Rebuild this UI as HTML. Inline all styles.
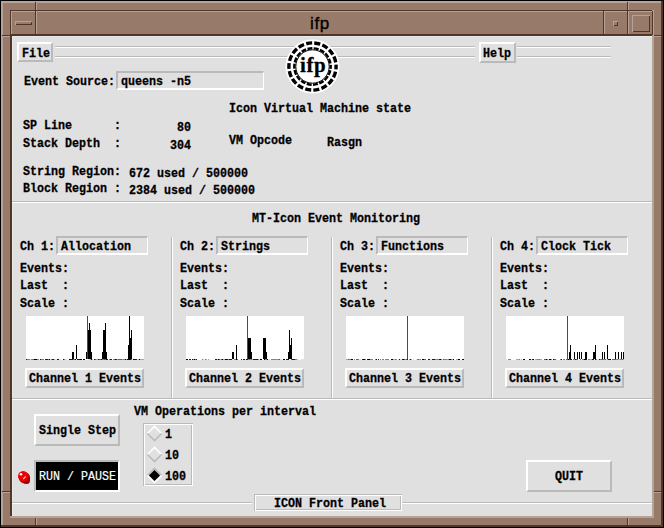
<!DOCTYPE html>
<html><head><meta charset="utf-8"><style>
html,body{margin:0;padding:0;width:664px;height:528px;overflow:hidden;background:#000}
body>div{position:absolute}
.b{box-sizing:border-box}
.t{position:absolute;font-family:"Liberation Mono",monospace;font-weight:bold;font-size:13.5px;line-height:15px;white-space:pre;transform-origin:0 0;transform:scaleX(0.864);-webkit-text-stroke:0.3px currentColor}
.tr{font-weight:normal;-webkit-text-stroke:0.2px currentColor}
.title{font-family:"Liberation Sans",sans-serif;font-size:17px;line-height:20px;color:#000;white-space:pre;letter-spacing:0.6px;-webkit-text-stroke:0.35px #000}
</style></head><body>
<div style="left:0px;top:0px;width:664px;height:528px;background:#000"></div>
<div style="left:1px;top:1px;width:662px;height:526px;background:#987a6a"></div>
<div style="left:1px;top:1px;width:661px;height:2px;background:#b6a297"></div>
<div style="left:1px;top:1px;width:2px;height:525px;background:#b6a297"></div>
<div style="left:661px;top:1px;width:2px;height:526px;background:#503626"></div>
<div style="left:1px;top:525px;width:662px;height:2px;background:#503626"></div>
<div style="left:2px;top:2px;width:1px;height:1px;background:#b6a297"></div>
<div style="left:2px;top:35px;width:8px;height:1px;background:#503626"></div>
<div style="left:2px;top:36px;width:8px;height:1px;background:#b6a297"></div>
<div style="left:2px;top:491px;width:8px;height:1px;background:#503626"></div>
<div style="left:2px;top:492px;width:8px;height:1px;background:#b6a297"></div>
<div style="left:654px;top:35px;width:7px;height:1px;background:#503626"></div>
<div style="left:654px;top:36px;width:7px;height:1px;background:#b6a297"></div>
<div style="left:654px;top:491px;width:7px;height:1px;background:#503626"></div>
<div style="left:654px;top:492px;width:7px;height:1px;background:#b6a297"></div>
<div style="left:35px;top:2px;width:1px;height:8px;background:#503626"></div>
<div style="left:36px;top:2px;width:1px;height:8px;background:#b6a297"></div>
<div style="left:35px;top:518px;width:1px;height:7px;background:#503626"></div>
<div style="left:36px;top:518px;width:1px;height:7px;background:#b6a297"></div>
<div style="left:627px;top:2px;width:1px;height:8px;background:#503626"></div>
<div style="left:628px;top:2px;width:1px;height:8px;background:#b6a297"></div>
<div style="left:627px;top:518px;width:1px;height:7px;background:#503626"></div>
<div style="left:628px;top:518px;width:1px;height:7px;background:#b6a297"></div>
<div style="left:10px;top:10px;width:644px;height:1px;background:#503626"></div>
<div style="left:10px;top:10px;width:1px;height:508px;background:#503626"></div>
<div style="left:652px;top:10px;width:2px;height:508px;background:#b6a297"></div>
<div style="left:10px;top:516px;width:644px;height:2px;background:#b6a297"></div>
<div style="left:11px;top:11px;width:25px;height:1px;background:#b6a297"></div>
<div style="left:11px;top:11px;width:1px;height:24px;background:#b6a297"></div>
<div style="left:35px;top:11px;width:1px;height:24px;background:#503626"></div>
<div style="left:11px;top:34px;width:25px;height:1px;background:#503626"></div>
<div style="left:36px;top:11px;width:568px;height:1px;background:#b6a297"></div>
<div style="left:36px;top:11px;width:1px;height:24px;background:#b6a297"></div>
<div style="left:603px;top:11px;width:1px;height:24px;background:#503626"></div>
<div style="left:36px;top:34px;width:568px;height:1px;background:#503626"></div>
<div style="left:604px;top:11px;width:24px;height:1px;background:#b6a297"></div>
<div style="left:604px;top:11px;width:1px;height:24px;background:#b6a297"></div>
<div style="left:627px;top:11px;width:1px;height:24px;background:#503626"></div>
<div style="left:604px;top:34px;width:24px;height:1px;background:#503626"></div>
<div style="left:628px;top:11px;width:25px;height:1px;background:#b6a297"></div>
<div style="left:628px;top:11px;width:1px;height:24px;background:#b6a297"></div>
<div style="left:652px;top:11px;width:1px;height:24px;background:#503626"></div>
<div style="left:628px;top:34px;width:25px;height:1px;background:#503626"></div>
<div style="left:11px;top:35px;width:641px;height:1px;background:#503626"></div>
<div style="left:11px;top:35px;width:1px;height:481px;background:#503626"></div>
<div style="left:15px;top:21px;width:17px;height:4px;background:#b6a297"></div>
<div style="left:16px;top:22px;width:16px;height:3px;background:#503626"></div>
<div style="left:16px;top:22px;width:15px;height:2px;background:#987a6a"></div>
<div style="left:613px;top:21px;width:5px;height:5px;background:#b6a297"></div>
<div style="left:614px;top:22px;width:4px;height:4px;background:#503626"></div>
<div style="left:614px;top:22px;width:3px;height:3px;background:#987a6a"></div>
<div style="left:632px;top:15px;width:18px;height:17px;background:#b6a297"></div>
<div style="left:633px;top:16px;width:17px;height:16px;background:#503626"></div>
<div style="left:633px;top:16px;width:16px;height:15px;background:#987a6a"></div>
<div class="title" style="left:310px;top:14px">ifp</div>
<div style="left:12px;top:36px;width:640px;height:480px;background:#e0e0e0"></div>
<div style="left:12px;top:36px;width:640px;height:1px;background:#e9e9e9"></div>
<div style="left:12px;top:36px;width:1px;height:480px;background:#e9e9e9"></div>
<div class="b" style="left:17px;top:42px;width:36px;height:20px;border-style:solid;border-width:2px;border-color:#ffffff #bababa #bababa #ffffff;"></div>
<div class="t" style="left:22px;top:46px;color:#000">File</div>
<div style="left:55px;top:46px;width:420px;height:1px;background:#bababa"></div>
<div style="left:55px;top:47px;width:420px;height:1px;background:#ffffff"></div>
<div style="left:55px;top:56px;width:420px;height:1px;background:#bababa"></div>
<div style="left:55px;top:57px;width:420px;height:1px;background:#ffffff"></div>
<div class="b" style="left:479px;top:42px;width:37px;height:21px;border-style:solid;border-width:2px;border-color:#ffffff #bababa #bababa #ffffff;"></div>
<div class="t" style="left:483px;top:46px;color:#000">Help</div>
<div style="left:517px;top:46px;width:94px;height:1px;background:#bababa"></div>
<div style="left:517px;top:47px;width:94px;height:1px;background:#ffffff"></div>
<div style="left:517px;top:56px;width:94px;height:1px;background:#bababa"></div>
<div style="left:517px;top:57px;width:94px;height:1px;background:#ffffff"></div>
<svg style="position:absolute;left:0;top:0" width="664" height="528">
<circle cx="312.5" cy="66.5" r="27" fill="#fff"/>
<circle cx="312.5" cy="66.5" r="23.6" fill="none" stroke="#000" stroke-width="3.4" stroke-dasharray="6.038 2.2" stroke-dashoffset="3.019"/>
<circle cx="312.5" cy="66.5" r="18.2" fill="none" stroke="#000" stroke-width="2.4" stroke-dasharray="4.953 1.4" stroke-dashoffset="2.476"/>
<circle cx="312.5" cy="66.5" r="16.7" fill="none" stroke="#000" stroke-width="1"/>
<text x="300" y="72" font-family="Liberation Serif" font-weight="bold" font-size="21" letter-spacing="0.6" stroke="#000" stroke-width="0.3">ifp</text>
</svg>
<div class="t" style="left:24px;top:74px;color:#000">Event Source:</div>
<div class="b" style="left:116px;top:71px;width:148px;height:19px;border-style:solid;border-width:2px 1px 2px 2px;border-color:#bababa #ffffff #ffffff #bababa"></div>
<div class="t" style="left:121px;top:74px;color:#000">queens -n5</div>
<div class="t" style="left:229px;top:101px;color:#000">Icon Virtual Machine state</div>
<div class="t" style="left:23px;top:118px;color:#000">SP Line      :</div>
<div class="t" style="left:177px;top:120px;color:#000">80</div>
<div class="t" style="left:23px;top:136px;color:#000">Stack Depth  :</div>
<div class="t" style="left:170px;top:138px;color:#000">304</div>
<div class="t" style="left:229px;top:133px;color:#000">VM Opcode</div>
<div class="t" style="left:327px;top:135px;color:#000">Rasgn</div>
<div class="t" style="left:23px;top:164px;color:#000">String Region:</div>
<div class="t" style="left:129px;top:166px;color:#000">672 used / 500000</div>
<div class="t" style="left:23px;top:181px;color:#000">Block Region :</div>
<div class="t" style="left:129px;top:183px;color:#000">2384 used / 500000</div>
<div style="left:12px;top:201px;width:640px;height:1px;background:#bababa"></div>
<div style="left:12px;top:202px;width:640px;height:1px;background:#ffffff"></div>
<div class="t" style="left:252px;top:211px;color:#000">MT-Icon Event Monitoring</div>
<div class="t" style="left:20px;top:239px;color:#000">Ch 1:</div>
<div class="b" style="left:56px;top:236px;width:92px;height:19px;border-style:solid;border-width:2px 1px 2px 2px;border-color:#bababa #ffffff #ffffff #bababa"></div>
<div class="t" style="left:61px;top:239px;color:#000">Allocation</div>
<div class="t" style="left:20px;top:261px;color:#000">Events:</div>
<div class="t" style="left:20px;top:278px;color:#000">Last  :</div>
<div class="t" style="left:20px;top:296px;color:#000">Scale :</div>
<div style="left:26px;top:316px;width:118px;height:44px;background:#ffffff"></div>
<div style="left:26px;top:359px;width:1px;height:1px;background:#0000f0"></div>
<div style="left:27px;top:359px;width:2px;height:1px;background:#00e000"></div>
<div style="left:29px;top:359px;width:1px;height:1px;background:#00e000"></div>
<div style="left:30px;top:359px;width:1px;height:1px;background:#ffff00"></div>
<div style="left:31px;top:359px;width:1px;height:1px;background:#00e000"></div>
<div style="left:32px;top:359px;width:1px;height:1px;background:#00e000"></div>
<div style="left:33px;top:359px;width:1px;height:1px;background:#f000f0"></div>
<div style="left:34px;top:359px;width:2px;height:1px;background:#000"></div>
<div style="left:36px;top:359px;width:1px;height:1px;background:#000"></div>
<div style="left:37px;top:359px;width:2px;height:1px;background:#00e000"></div>
<div style="left:39px;top:359px;width:1px;height:1px;background:#fff"></div>
<div style="left:40px;top:359px;width:1px;height:1px;background:#0000f0"></div>
<div style="left:41px;top:359px;width:2px;height:1px;background:#00e000"></div>
<div style="left:43px;top:359px;width:1px;height:1px;background:#00e000"></div>
<div style="left:44px;top:359px;width:1px;height:1px;background:#fff"></div>
<div style="left:45px;top:359px;width:2px;height:1px;background:#0000f0"></div>
<div style="left:47px;top:359px;width:1px;height:1px;background:#0000f0"></div>
<div style="left:48px;top:359px;width:1px;height:1px;background:#00e000"></div>
<div style="left:49px;top:359px;width:1px;height:1px;background:#000"></div>
<div style="left:50px;top:359px;width:1px;height:1px;background:#ffff00"></div>
<div style="left:51px;top:359px;width:1px;height:1px;background:#00e000"></div>
<div style="left:52px;top:359px;width:1px;height:1px;background:#0000f0"></div>
<div style="left:53px;top:359px;width:1px;height:1px;background:#0000f0"></div>
<div style="left:54px;top:359px;width:1px;height:1px;background:#00f0f0"></div>
<div style="left:55px;top:359px;width:2px;height:1px;background:#ffff00"></div>
<div style="left:57px;top:359px;width:2px;height:1px;background:#0000f0"></div>
<div style="left:59px;top:359px;width:2px;height:1px;background:#ffff00"></div>
<div style="left:61px;top:359px;width:1px;height:1px;background:#fff"></div>
<div style="left:62px;top:359px;width:1px;height:1px;background:#fff"></div>
<div style="left:63px;top:359px;width:1px;height:1px;background:#0000f0"></div>
<div style="left:64px;top:359px;width:1px;height:1px;background:#00e000"></div>
<div style="left:65px;top:359px;width:2px;height:1px;background:#ffff00"></div>
<div style="left:67px;top:359px;width:2px;height:1px;background:#fff"></div>
<div style="left:69px;top:359px;width:1px;height:1px;background:#000"></div>
<div style="left:70px;top:359px;width:2px;height:1px;background:#0000f0"></div>
<div style="left:72px;top:359px;width:1px;height:1px;background:#0000f0"></div>
<div style="left:73px;top:359px;width:2px;height:1px;background:#f000f0"></div>
<div style="left:75px;top:359px;width:1px;height:1px;background:#000"></div>
<div style="left:76px;top:359px;width:1px;height:1px;background:#ffff00"></div>
<div style="left:77px;top:359px;width:1px;height:1px;background:#0000f0"></div>
<div style="left:78px;top:359px;width:2px;height:1px;background:#0000f0"></div>
<div style="left:80px;top:359px;width:2px;height:1px;background:#000"></div>
<div style="left:82px;top:359px;width:1px;height:1px;background:#fff"></div>
<div style="left:83px;top:359px;width:2px;height:1px;background:#000"></div>
<div style="left:85px;top:359px;width:1px;height:1px;background:#fff"></div>
<div style="left:86px;top:359px;width:2px;height:1px;background:#fff"></div>
<div style="left:88px;top:359px;width:2px;height:1px;background:#ffff00"></div>
<div style="left:90px;top:359px;width:1px;height:1px;background:#00f0f0"></div>
<div style="left:91px;top:359px;width:1px;height:1px;background:#0000f0"></div>
<div style="left:92px;top:359px;width:1px;height:1px;background:#00f0f0"></div>
<div style="left:93px;top:359px;width:1px;height:1px;background:#fff"></div>
<div style="left:94px;top:359px;width:1px;height:1px;background:#0000f0"></div>
<div style="left:95px;top:359px;width:1px;height:1px;background:#f000f0"></div>
<div style="left:96px;top:359px;width:2px;height:1px;background:#00f0f0"></div>
<div style="left:98px;top:359px;width:1px;height:1px;background:#0000f0"></div>
<div style="left:99px;top:359px;width:2px;height:1px;background:#f000f0"></div>
<div style="left:101px;top:359px;width:1px;height:1px;background:#0000f0"></div>
<div style="left:102px;top:359px;width:2px;height:1px;background:#00e000"></div>
<div style="left:104px;top:359px;width:1px;height:1px;background:#f000f0"></div>
<div style="left:105px;top:359px;width:1px;height:1px;background:#f000f0"></div>
<div style="left:106px;top:359px;width:1px;height:1px;background:#0000f0"></div>
<div style="left:107px;top:359px;width:1px;height:1px;background:#0000f0"></div>
<div style="left:108px;top:359px;width:1px;height:1px;background:#fff"></div>
<div style="left:109px;top:359px;width:1px;height:1px;background:#00e000"></div>
<div style="left:110px;top:359px;width:2px;height:1px;background:#0000f0"></div>
<div style="left:112px;top:359px;width:1px;height:1px;background:#fff"></div>
<div style="left:113px;top:359px;width:1px;height:1px;background:#00e000"></div>
<div style="left:114px;top:359px;width:1px;height:1px;background:#f000f0"></div>
<div style="left:115px;top:359px;width:1px;height:1px;background:#0000f0"></div>
<div style="left:116px;top:359px;width:1px;height:1px;background:#0000f0"></div>
<div style="left:117px;top:359px;width:1px;height:1px;background:#00f0f0"></div>
<div style="left:118px;top:359px;width:2px;height:1px;background:#f000f0"></div>
<div style="left:120px;top:359px;width:2px;height:1px;background:#f000f0"></div>
<div style="left:122px;top:359px;width:1px;height:1px;background:#00f0f0"></div>
<div style="left:123px;top:359px;width:2px;height:1px;background:#00e000"></div>
<div style="left:125px;top:359px;width:1px;height:1px;background:#000"></div>
<div style="left:126px;top:359px;width:1px;height:1px;background:#00f0f0"></div>
<div style="left:127px;top:359px;width:1px;height:1px;background:#000"></div>
<div style="left:128px;top:359px;width:1px;height:1px;background:#0000f0"></div>
<div style="left:129px;top:359px;width:1px;height:1px;background:#000"></div>
<div style="left:130px;top:359px;width:1px;height:1px;background:#0000f0"></div>
<div style="left:131px;top:359px;width:1px;height:1px;background:#00e000"></div>
<div style="left:132px;top:359px;width:1px;height:1px;background:#ffff00"></div>
<div style="left:133px;top:359px;width:1px;height:1px;background:#000"></div>
<div style="left:134px;top:359px;width:1px;height:1px;background:#0000f0"></div>
<div style="left:135px;top:359px;width:2px;height:1px;background:#0000f0"></div>
<div style="left:137px;top:359px;width:1px;height:1px;background:#ffff00"></div>
<div style="left:138px;top:359px;width:1px;height:1px;background:#00f0f0"></div>
<div style="left:139px;top:359px;width:1px;height:1px;background:#000"></div>
<div style="left:140px;top:359px;width:2px;height:1px;background:#00f0f0"></div>
<div style="left:142px;top:359px;width:2px;height:1px;background:#00f0f0"></div>
<div style="left:87px;top:316px;width:1px;height:43px;background:#f00"></div>
<div class="b" style="left:25px;top:368px;width:119px;height:20px;border-style:solid;border-width:2px;border-color:#ffffff #bababa #bababa #ffffff;"></div>
<div class="t" style="left:29px;top:371px;color:#000">Channel 1 Events</div>
<div class="t" style="left:180px;top:239px;color:#000">Ch 2:</div>
<div class="b" style="left:216px;top:236px;width:92px;height:19px;border-style:solid;border-width:2px 1px 2px 2px;border-color:#bababa #ffffff #ffffff #bababa"></div>
<div class="t" style="left:221px;top:239px;color:#000">Strings</div>
<div class="t" style="left:180px;top:261px;color:#000">Events:</div>
<div class="t" style="left:180px;top:278px;color:#000">Last  :</div>
<div class="t" style="left:180px;top:296px;color:#000">Scale :</div>
<div style="left:186px;top:316px;width:118px;height:44px;background:#ffffff"></div>
<div style="left:186px;top:359px;width:1px;height:1px;background:#000"></div>
<div style="left:187px;top:359px;width:1px;height:1px;background:#000"></div>
<div style="left:188px;top:359px;width:1px;height:1px;background:#fff"></div>
<div style="left:189px;top:359px;width:2px;height:1px;background:#0000f0"></div>
<div style="left:191px;top:359px;width:1px;height:1px;background:#fff"></div>
<div style="left:192px;top:359px;width:1px;height:1px;background:#0000f0"></div>
<div style="left:193px;top:359px;width:1px;height:1px;background:#00e000"></div>
<div style="left:194px;top:359px;width:1px;height:1px;background:#000"></div>
<div style="left:195px;top:359px;width:1px;height:1px;background:#00e000"></div>
<div style="left:196px;top:359px;width:1px;height:1px;background:#0000f0"></div>
<div style="left:197px;top:359px;width:1px;height:1px;background:#fff"></div>
<div style="left:198px;top:359px;width:1px;height:1px;background:#fff"></div>
<div style="left:199px;top:359px;width:1px;height:1px;background:#fff"></div>
<div style="left:200px;top:359px;width:2px;height:1px;background:#fff"></div>
<div style="left:202px;top:359px;width:1px;height:1px;background:#00e000"></div>
<div style="left:203px;top:359px;width:2px;height:1px;background:#ffff00"></div>
<div style="left:205px;top:359px;width:1px;height:1px;background:#00e000"></div>
<div style="left:206px;top:359px;width:1px;height:1px;background:#00f0f0"></div>
<div style="left:207px;top:359px;width:1px;height:1px;background:#fff"></div>
<div style="left:208px;top:359px;width:1px;height:1px;background:#00f0f0"></div>
<div style="left:209px;top:359px;width:1px;height:1px;background:#ffff00"></div>
<div style="left:210px;top:359px;width:1px;height:1px;background:#fff"></div>
<div style="left:211px;top:359px;width:1px;height:1px;background:#fff"></div>
<div style="left:212px;top:359px;width:2px;height:1px;background:#fff"></div>
<div style="left:214px;top:359px;width:1px;height:1px;background:#fff"></div>
<div style="left:215px;top:359px;width:2px;height:1px;background:#0000f0"></div>
<div style="left:217px;top:359px;width:1px;height:1px;background:#00f0f0"></div>
<div style="left:218px;top:359px;width:1px;height:1px;background:#000"></div>
<div style="left:219px;top:359px;width:1px;height:1px;background:#f000f0"></div>
<div style="left:220px;top:359px;width:1px;height:1px;background:#00f0f0"></div>
<div style="left:221px;top:359px;width:1px;height:1px;background:#f000f0"></div>
<div style="left:222px;top:359px;width:1px;height:1px;background:#000"></div>
<div style="left:223px;top:359px;width:2px;height:1px;background:#00f0f0"></div>
<div style="left:225px;top:359px;width:2px;height:1px;background:#000"></div>
<div style="left:227px;top:359px;width:1px;height:1px;background:#0000f0"></div>
<div style="left:228px;top:359px;width:1px;height:1px;background:#00e000"></div>
<div style="left:229px;top:359px;width:1px;height:1px;background:#0000f0"></div>
<div style="left:230px;top:359px;width:2px;height:1px;background:#0000f0"></div>
<div style="left:232px;top:359px;width:2px;height:1px;background:#ffff00"></div>
<div style="left:234px;top:359px;width:1px;height:1px;background:#00e000"></div>
<div style="left:235px;top:359px;width:1px;height:1px;background:#00e000"></div>
<div style="left:236px;top:359px;width:1px;height:1px;background:#000"></div>
<div style="left:237px;top:359px;width:1px;height:1px;background:#f000f0"></div>
<div style="left:238px;top:359px;width:1px;height:1px;background:#fff"></div>
<div style="left:239px;top:359px;width:1px;height:1px;background:#fff"></div>
<div style="left:240px;top:359px;width:1px;height:1px;background:#fff"></div>
<div style="left:241px;top:359px;width:1px;height:1px;background:#0000f0"></div>
<div style="left:242px;top:359px;width:1px;height:1px;background:#fff"></div>
<div style="left:243px;top:359px;width:2px;height:1px;background:#0000f0"></div>
<div style="left:245px;top:359px;width:1px;height:1px;background:#ffff00"></div>
<div style="left:246px;top:359px;width:2px;height:1px;background:#0000f0"></div>
<div style="left:248px;top:359px;width:2px;height:1px;background:#00e000"></div>
<div style="left:250px;top:359px;width:1px;height:1px;background:#00e000"></div>
<div style="left:251px;top:359px;width:1px;height:1px;background:#00e000"></div>
<div style="left:252px;top:359px;width:1px;height:1px;background:#00f0f0"></div>
<div style="left:253px;top:359px;width:1px;height:1px;background:#0000f0"></div>
<div style="left:254px;top:359px;width:1px;height:1px;background:#0000f0"></div>
<div style="left:255px;top:359px;width:1px;height:1px;background:#0000f0"></div>
<div style="left:256px;top:359px;width:2px;height:1px;background:#0000f0"></div>
<div style="left:258px;top:359px;width:1px;height:1px;background:#00e000"></div>
<div style="left:259px;top:359px;width:1px;height:1px;background:#ffff00"></div>
<div style="left:260px;top:359px;width:2px;height:1px;background:#000"></div>
<div style="left:262px;top:359px;width:1px;height:1px;background:#fff"></div>
<div style="left:263px;top:359px;width:1px;height:1px;background:#fff"></div>
<div style="left:264px;top:359px;width:1px;height:1px;background:#000"></div>
<div style="left:265px;top:359px;width:2px;height:1px;background:#00e000"></div>
<div style="left:267px;top:359px;width:1px;height:1px;background:#000"></div>
<div style="left:268px;top:359px;width:2px;height:1px;background:#ffff00"></div>
<div style="left:270px;top:359px;width:1px;height:1px;background:#fff"></div>
<div style="left:271px;top:359px;width:2px;height:1px;background:#00e000"></div>
<div style="left:273px;top:359px;width:2px;height:1px;background:#00e000"></div>
<div style="left:275px;top:359px;width:1px;height:1px;background:#00e000"></div>
<div style="left:276px;top:359px;width:1px;height:1px;background:#00e000"></div>
<div style="left:277px;top:359px;width:1px;height:1px;background:#00f0f0"></div>
<div style="left:278px;top:359px;width:1px;height:1px;background:#f000f0"></div>
<div style="left:279px;top:359px;width:1px;height:1px;background:#f000f0"></div>
<div style="left:280px;top:359px;width:2px;height:1px;background:#ffff00"></div>
<div style="left:282px;top:359px;width:1px;height:1px;background:#fff"></div>
<div style="left:283px;top:359px;width:2px;height:1px;background:#000"></div>
<div style="left:285px;top:359px;width:1px;height:1px;background:#fff"></div>
<div style="left:286px;top:359px;width:1px;height:1px;background:#0000f0"></div>
<div style="left:287px;top:359px;width:1px;height:1px;background:#0000f0"></div>
<div style="left:288px;top:359px;width:1px;height:1px;background:#0000f0"></div>
<div style="left:289px;top:359px;width:2px;height:1px;background:#fff"></div>
<div style="left:291px;top:359px;width:1px;height:1px;background:#f000f0"></div>
<div style="left:292px;top:359px;width:2px;height:1px;background:#0000f0"></div>
<div style="left:294px;top:359px;width:1px;height:1px;background:#0000f0"></div>
<div style="left:295px;top:359px;width:2px;height:1px;background:#00e000"></div>
<div style="left:297px;top:359px;width:2px;height:1px;background:#ffff00"></div>
<div style="left:299px;top:359px;width:2px;height:1px;background:#fff"></div>
<div style="left:301px;top:359px;width:1px;height:1px;background:#ffff00"></div>
<div style="left:302px;top:359px;width:1px;height:1px;background:#ffff00"></div>
<div style="left:303px;top:359px;width:1px;height:1px;background:#ffff00"></div>
<div style="left:247px;top:316px;width:1px;height:43px;background:#f00"></div>
<div class="b" style="left:185px;top:368px;width:119px;height:20px;border-style:solid;border-width:2px;border-color:#ffffff #bababa #bababa #ffffff;"></div>
<div class="t" style="left:189px;top:371px;color:#000">Channel 2 Events</div>
<div style="left:171px;top:237px;width:1px;height:161px;background:#bababa"></div>
<div style="left:172px;top:237px;width:1px;height:161px;background:#ffffff"></div>
<div class="t" style="left:340px;top:239px;color:#000">Ch 3:</div>
<div class="b" style="left:376px;top:236px;width:92px;height:19px;border-style:solid;border-width:2px 1px 2px 2px;border-color:#bababa #ffffff #ffffff #bababa"></div>
<div class="t" style="left:381px;top:239px;color:#000">Functions</div>
<div class="t" style="left:340px;top:261px;color:#000">Events:</div>
<div class="t" style="left:340px;top:278px;color:#000">Last  :</div>
<div class="t" style="left:340px;top:296px;color:#000">Scale :</div>
<div style="left:346px;top:316px;width:118px;height:44px;background:#ffffff"></div>
<div style="left:346px;top:359px;width:2px;height:1px;background:#00f0f0"></div>
<div style="left:348px;top:359px;width:1px;height:1px;background:#f000f0"></div>
<div style="left:349px;top:359px;width:1px;height:1px;background:#00e000"></div>
<div style="left:350px;top:359px;width:1px;height:1px;background:#00e000"></div>
<div style="left:351px;top:359px;width:1px;height:1px;background:#000"></div>
<div style="left:352px;top:359px;width:1px;height:1px;background:#000"></div>
<div style="left:353px;top:359px;width:1px;height:1px;background:#fff"></div>
<div style="left:354px;top:359px;width:1px;height:1px;background:#00e000"></div>
<div style="left:355px;top:359px;width:1px;height:1px;background:#fff"></div>
<div style="left:356px;top:359px;width:1px;height:1px;background:#f000f0"></div>
<div style="left:357px;top:359px;width:1px;height:1px;background:#f000f0"></div>
<div style="left:358px;top:359px;width:1px;height:1px;background:#00e000"></div>
<div style="left:359px;top:359px;width:2px;height:1px;background:#ffff00"></div>
<div style="left:361px;top:359px;width:1px;height:1px;background:#fff"></div>
<div style="left:362px;top:359px;width:1px;height:1px;background:#0000f0"></div>
<div style="left:363px;top:359px;width:2px;height:1px;background:#000"></div>
<div style="left:365px;top:359px;width:1px;height:1px;background:#00e000"></div>
<div style="left:366px;top:359px;width:1px;height:1px;background:#fff"></div>
<div style="left:367px;top:359px;width:1px;height:1px;background:#0000f0"></div>
<div style="left:368px;top:359px;width:1px;height:1px;background:#000"></div>
<div style="left:369px;top:359px;width:1px;height:1px;background:#000"></div>
<div style="left:370px;top:359px;width:2px;height:1px;background:#00e000"></div>
<div style="left:372px;top:359px;width:1px;height:1px;background:#00e000"></div>
<div style="left:373px;top:359px;width:2px;height:1px;background:#fff"></div>
<div style="left:375px;top:359px;width:1px;height:1px;background:#00e000"></div>
<div style="left:376px;top:359px;width:1px;height:1px;background:#000"></div>
<div style="left:377px;top:359px;width:1px;height:1px;background:#fff"></div>
<div style="left:378px;top:359px;width:1px;height:1px;background:#0000f0"></div>
<div style="left:379px;top:359px;width:1px;height:1px;background:#fff"></div>
<div style="left:380px;top:359px;width:1px;height:1px;background:#00e000"></div>
<div style="left:381px;top:359px;width:1px;height:1px;background:#fff"></div>
<div style="left:382px;top:359px;width:2px;height:1px;background:#00e000"></div>
<div style="left:384px;top:359px;width:1px;height:1px;background:#fff"></div>
<div style="left:385px;top:359px;width:1px;height:1px;background:#00e000"></div>
<div style="left:386px;top:359px;width:1px;height:1px;background:#00e000"></div>
<div style="left:387px;top:359px;width:1px;height:1px;background:#00e000"></div>
<div style="left:388px;top:359px;width:1px;height:1px;background:#00e000"></div>
<div style="left:389px;top:359px;width:2px;height:1px;background:#fff"></div>
<div style="left:391px;top:359px;width:2px;height:1px;background:#000"></div>
<div style="left:393px;top:359px;width:2px;height:1px;background:#00f0f0"></div>
<div style="left:395px;top:359px;width:2px;height:1px;background:#00e000"></div>
<div style="left:397px;top:359px;width:1px;height:1px;background:#fff"></div>
<div style="left:398px;top:359px;width:1px;height:1px;background:#ffff00"></div>
<div style="left:399px;top:359px;width:1px;height:1px;background:#0000f0"></div>
<div style="left:400px;top:359px;width:2px;height:1px;background:#ffff00"></div>
<div style="left:402px;top:359px;width:1px;height:1px;background:#0000f0"></div>
<div style="left:403px;top:359px;width:1px;height:1px;background:#000"></div>
<div style="left:404px;top:359px;width:1px;height:1px;background:#f000f0"></div>
<div style="left:405px;top:359px;width:1px;height:1px;background:#00e000"></div>
<div style="left:406px;top:359px;width:1px;height:1px;background:#f000f0"></div>
<div style="left:407px;top:359px;width:1px;height:1px;background:#0000f0"></div>
<div style="left:408px;top:359px;width:1px;height:1px;background:#fff"></div>
<div style="left:409px;top:359px;width:1px;height:1px;background:#00f0f0"></div>
<div style="left:410px;top:359px;width:1px;height:1px;background:#0000f0"></div>
<div style="left:411px;top:359px;width:1px;height:1px;background:#00f0f0"></div>
<div style="left:412px;top:359px;width:1px;height:1px;background:#fff"></div>
<div style="left:413px;top:359px;width:1px;height:1px;background:#ffff00"></div>
<div style="left:414px;top:359px;width:1px;height:1px;background:#fff"></div>
<div style="left:415px;top:359px;width:1px;height:1px;background:#fff"></div>
<div style="left:416px;top:359px;width:1px;height:1px;background:#ffff00"></div>
<div style="left:417px;top:359px;width:1px;height:1px;background:#00e000"></div>
<div style="left:418px;top:359px;width:1px;height:1px;background:#f000f0"></div>
<div style="left:419px;top:359px;width:1px;height:1px;background:#00f0f0"></div>
<div style="left:420px;top:359px;width:1px;height:1px;background:#00e000"></div>
<div style="left:421px;top:359px;width:1px;height:1px;background:#fff"></div>
<div style="left:422px;top:359px;width:1px;height:1px;background:#000"></div>
<div style="left:423px;top:359px;width:1px;height:1px;background:#000"></div>
<div style="left:424px;top:359px;width:1px;height:1px;background:#f000f0"></div>
<div style="left:425px;top:359px;width:1px;height:1px;background:#f000f0"></div>
<div style="left:426px;top:359px;width:1px;height:1px;background:#fff"></div>
<div style="left:427px;top:359px;width:1px;height:1px;background:#fff"></div>
<div style="left:428px;top:359px;width:1px;height:1px;background:#0000f0"></div>
<div style="left:429px;top:359px;width:1px;height:1px;background:#0000f0"></div>
<div style="left:430px;top:359px;width:2px;height:1px;background:#ffff00"></div>
<div style="left:432px;top:359px;width:2px;height:1px;background:#0000f0"></div>
<div style="left:434px;top:359px;width:1px;height:1px;background:#0000f0"></div>
<div style="left:435px;top:359px;width:1px;height:1px;background:#00e000"></div>
<div style="left:436px;top:359px;width:2px;height:1px;background:#00e000"></div>
<div style="left:438px;top:359px;width:1px;height:1px;background:#00e000"></div>
<div style="left:439px;top:359px;width:1px;height:1px;background:#0000f0"></div>
<div style="left:440px;top:359px;width:1px;height:1px;background:#000"></div>
<div style="left:441px;top:359px;width:1px;height:1px;background:#00e000"></div>
<div style="left:442px;top:359px;width:1px;height:1px;background:#ffff00"></div>
<div style="left:443px;top:359px;width:1px;height:1px;background:#f000f0"></div>
<div style="left:444px;top:359px;width:2px;height:1px;background:#00e000"></div>
<div style="left:446px;top:359px;width:1px;height:1px;background:#00e000"></div>
<div style="left:447px;top:359px;width:1px;height:1px;background:#00f0f0"></div>
<div style="left:448px;top:359px;width:1px;height:1px;background:#00e000"></div>
<div style="left:449px;top:359px;width:2px;height:1px;background:#000"></div>
<div style="left:451px;top:359px;width:1px;height:1px;background:#00e000"></div>
<div style="left:452px;top:359px;width:1px;height:1px;background:#00f0f0"></div>
<div style="left:453px;top:359px;width:1px;height:1px;background:#000"></div>
<div style="left:454px;top:359px;width:1px;height:1px;background:#fff"></div>
<div style="left:455px;top:359px;width:1px;height:1px;background:#fff"></div>
<div style="left:456px;top:359px;width:2px;height:1px;background:#00f0f0"></div>
<div style="left:458px;top:359px;width:2px;height:1px;background:#000"></div>
<div style="left:460px;top:359px;width:2px;height:1px;background:#fff"></div>
<div style="left:462px;top:359px;width:1px;height:1px;background:#0000f0"></div>
<div style="left:463px;top:359px;width:1px;height:1px;background:#000"></div>
<div style="left:407px;top:316px;width:1px;height:43px;background:#f00"></div>
<div class="b" style="left:345px;top:368px;width:119px;height:20px;border-style:solid;border-width:2px;border-color:#ffffff #bababa #bababa #ffffff;"></div>
<div class="t" style="left:349px;top:371px;color:#000">Channel 3 Events</div>
<div style="left:331px;top:237px;width:1px;height:161px;background:#bababa"></div>
<div style="left:332px;top:237px;width:1px;height:161px;background:#ffffff"></div>
<div class="t" style="left:500px;top:239px;color:#000">Ch 4:</div>
<div class="b" style="left:536px;top:236px;width:92px;height:19px;border-style:solid;border-width:2px 1px 2px 2px;border-color:#bababa #ffffff #ffffff #bababa"></div>
<div class="t" style="left:541px;top:239px;color:#000">Clock Tick</div>
<div class="t" style="left:500px;top:261px;color:#000">Events:</div>
<div class="t" style="left:500px;top:278px;color:#000">Last  :</div>
<div class="t" style="left:500px;top:296px;color:#000">Scale :</div>
<div style="left:506px;top:316px;width:118px;height:44px;background:#ffffff"></div>
<div style="left:506px;top:359px;width:1px;height:1px;background:#ffff00"></div>
<div style="left:507px;top:359px;width:1px;height:1px;background:#fff"></div>
<div style="left:508px;top:359px;width:1px;height:1px;background:#00e000"></div>
<div style="left:509px;top:359px;width:2px;height:1px;background:#00e000"></div>
<div style="left:511px;top:359px;width:2px;height:1px;background:#fff"></div>
<div style="left:513px;top:359px;width:1px;height:1px;background:#fff"></div>
<div style="left:514px;top:359px;width:2px;height:1px;background:#fff"></div>
<div style="left:516px;top:359px;width:1px;height:1px;background:#00f0f0"></div>
<div style="left:517px;top:359px;width:2px;height:1px;background:#00f0f0"></div>
<div style="left:519px;top:359px;width:1px;height:1px;background:#00e000"></div>
<div style="left:520px;top:359px;width:1px;height:1px;background:#fff"></div>
<div style="left:521px;top:359px;width:1px;height:1px;background:#00f0f0"></div>
<div style="left:522px;top:359px;width:1px;height:1px;background:#fff"></div>
<div style="left:523px;top:359px;width:2px;height:1px;background:#000"></div>
<div style="left:525px;top:359px;width:2px;height:1px;background:#fff"></div>
<div style="left:527px;top:359px;width:2px;height:1px;background:#fff"></div>
<div style="left:529px;top:359px;width:1px;height:1px;background:#000"></div>
<div style="left:530px;top:359px;width:1px;height:1px;background:#0000f0"></div>
<div style="left:531px;top:359px;width:1px;height:1px;background:#ffff00"></div>
<div style="left:532px;top:359px;width:1px;height:1px;background:#0000f0"></div>
<div style="left:533px;top:359px;width:1px;height:1px;background:#000"></div>
<div style="left:534px;top:359px;width:1px;height:1px;background:#fff"></div>
<div style="left:535px;top:359px;width:2px;height:1px;background:#00f0f0"></div>
<div style="left:537px;top:359px;width:2px;height:1px;background:#00e000"></div>
<div style="left:539px;top:359px;width:1px;height:1px;background:#00e000"></div>
<div style="left:540px;top:359px;width:2px;height:1px;background:#00f0f0"></div>
<div style="left:542px;top:359px;width:2px;height:1px;background:#fff"></div>
<div style="left:544px;top:359px;width:1px;height:1px;background:#f000f0"></div>
<div style="left:545px;top:359px;width:1px;height:1px;background:#f000f0"></div>
<div style="left:546px;top:359px;width:1px;height:1px;background:#000"></div>
<div style="left:547px;top:359px;width:1px;height:1px;background:#00e000"></div>
<div style="left:548px;top:359px;width:1px;height:1px;background:#ffff00"></div>
<div style="left:549px;top:359px;width:2px;height:1px;background:#000"></div>
<div style="left:551px;top:359px;width:1px;height:1px;background:#00e000"></div>
<div style="left:552px;top:359px;width:1px;height:1px;background:#fff"></div>
<div style="left:553px;top:359px;width:1px;height:1px;background:#000"></div>
<div style="left:554px;top:359px;width:2px;height:1px;background:#f000f0"></div>
<div style="left:556px;top:359px;width:1px;height:1px;background:#ffff00"></div>
<div style="left:557px;top:359px;width:2px;height:1px;background:#fff"></div>
<div style="left:559px;top:359px;width:1px;height:1px;background:#fff"></div>
<div style="left:560px;top:359px;width:1px;height:1px;background:#00e000"></div>
<div style="left:561px;top:359px;width:1px;height:1px;background:#0000f0"></div>
<div style="left:562px;top:359px;width:1px;height:1px;background:#fff"></div>
<div style="left:563px;top:359px;width:2px;height:1px;background:#00e000"></div>
<div style="left:565px;top:359px;width:1px;height:1px;background:#fff"></div>
<div style="left:566px;top:359px;width:1px;height:1px;background:#f000f0"></div>
<div style="left:567px;top:359px;width:1px;height:1px;background:#f000f0"></div>
<div style="left:568px;top:359px;width:1px;height:1px;background:#000"></div>
<div style="left:569px;top:359px;width:1px;height:1px;background:#f000f0"></div>
<div style="left:570px;top:359px;width:2px;height:1px;background:#0000f0"></div>
<div style="left:572px;top:359px;width:1px;height:1px;background:#fff"></div>
<div style="left:573px;top:359px;width:2px;height:1px;background:#00e000"></div>
<div style="left:575px;top:359px;width:1px;height:1px;background:#0000f0"></div>
<div style="left:576px;top:359px;width:2px;height:1px;background:#f000f0"></div>
<div style="left:578px;top:359px;width:1px;height:1px;background:#fff"></div>
<div style="left:579px;top:359px;width:1px;height:1px;background:#fff"></div>
<div style="left:580px;top:359px;width:1px;height:1px;background:#f000f0"></div>
<div style="left:581px;top:359px;width:1px;height:1px;background:#fff"></div>
<div style="left:582px;top:359px;width:2px;height:1px;background:#00e000"></div>
<div style="left:584px;top:359px;width:2px;height:1px;background:#000"></div>
<div style="left:586px;top:359px;width:1px;height:1px;background:#0000f0"></div>
<div style="left:587px;top:359px;width:1px;height:1px;background:#fff"></div>
<div style="left:588px;top:359px;width:2px;height:1px;background:#00e000"></div>
<div style="left:590px;top:359px;width:1px;height:1px;background:#00f0f0"></div>
<div style="left:591px;top:359px;width:1px;height:1px;background:#00f0f0"></div>
<div style="left:592px;top:359px;width:2px;height:1px;background:#0000f0"></div>
<div style="left:594px;top:359px;width:1px;height:1px;background:#fff"></div>
<div style="left:595px;top:359px;width:1px;height:1px;background:#0000f0"></div>
<div style="left:596px;top:359px;width:1px;height:1px;background:#00e000"></div>
<div style="left:597px;top:359px;width:1px;height:1px;background:#ffff00"></div>
<div style="left:598px;top:359px;width:1px;height:1px;background:#ffff00"></div>
<div style="left:599px;top:359px;width:1px;height:1px;background:#0000f0"></div>
<div style="left:600px;top:359px;width:1px;height:1px;background:#00e000"></div>
<div style="left:601px;top:359px;width:2px;height:1px;background:#f000f0"></div>
<div style="left:603px;top:359px;width:2px;height:1px;background:#00e000"></div>
<div style="left:605px;top:359px;width:1px;height:1px;background:#f000f0"></div>
<div style="left:606px;top:359px;width:1px;height:1px;background:#ffff00"></div>
<div style="left:607px;top:359px;width:1px;height:1px;background:#00f0f0"></div>
<div style="left:608px;top:359px;width:1px;height:1px;background:#0000f0"></div>
<div style="left:609px;top:359px;width:1px;height:1px;background:#0000f0"></div>
<div style="left:610px;top:359px;width:1px;height:1px;background:#000"></div>
<div style="left:611px;top:359px;width:1px;height:1px;background:#fff"></div>
<div style="left:612px;top:359px;width:2px;height:1px;background:#f000f0"></div>
<div style="left:614px;top:359px;width:2px;height:1px;background:#f000f0"></div>
<div style="left:616px;top:359px;width:1px;height:1px;background:#00e000"></div>
<div style="left:617px;top:359px;width:1px;height:1px;background:#00e000"></div>
<div style="left:618px;top:359px;width:2px;height:1px;background:#00f0f0"></div>
<div style="left:620px;top:359px;width:2px;height:1px;background:#00e000"></div>
<div style="left:622px;top:359px;width:1px;height:1px;background:#f000f0"></div>
<div style="left:623px;top:359px;width:1px;height:1px;background:#00f0f0"></div>
<div style="left:567px;top:316px;width:1px;height:43px;background:#f00"></div>
<div class="b" style="left:505px;top:368px;width:119px;height:20px;border-style:solid;border-width:2px;border-color:#ffffff #bababa #bababa #ffffff;"></div>
<div class="t" style="left:509px;top:371px;color:#000">Channel 4 Events</div>
<div style="left:491px;top:237px;width:1px;height:161px;background:#bababa"></div>
<div style="left:492px;top:237px;width:1px;height:161px;background:#ffffff"></div>
<div style="left:72px;top:352px;width:1px;height:7px;background:#000"></div>
<div style="left:73px;top:352px;width:1px;height:7px;background:#000"></div>
<div style="left:76px;top:345px;width:1px;height:14px;background:#000"></div>
<div style="left:86px;top:352px;width:1px;height:7px;background:#000"></div>
<div style="left:88px;top:330px;width:1px;height:29px;background:#000"></div>
<div style="left:89px;top:323px;width:1px;height:36px;background:#000"></div>
<div style="left:90px;top:330px;width:1px;height:29px;background:#000"></div>
<div style="left:91px;top:352px;width:1px;height:7px;background:#000"></div>
<div style="left:102px;top:352px;width:1px;height:7px;background:#000"></div>
<div style="left:103px;top:330px;width:1px;height:29px;background:#000"></div>
<div style="left:104px;top:330px;width:1px;height:29px;background:#000"></div>
<div style="left:105px;top:323px;width:1px;height:36px;background:#000"></div>
<div style="left:106px;top:352px;width:1px;height:7px;background:#000"></div>
<div style="left:128px;top:345px;width:1px;height:14px;background:#000"></div>
<div style="left:129px;top:316px;width:1px;height:43px;background:#000"></div>
<div style="left:130px;top:338px;width:1px;height:21px;background:#000"></div>
<div style="left:131px;top:330px;width:1px;height:29px;background:#000"></div>
<div style="left:232px;top:352px;width:1px;height:7px;background:#000"></div>
<div style="left:233px;top:352px;width:1px;height:7px;background:#000"></div>
<div style="left:236px;top:345px;width:1px;height:14px;background:#000"></div>
<div style="left:248px;top:338px;width:1px;height:21px;background:#000"></div>
<div style="left:249px;top:338px;width:1px;height:21px;background:#000"></div>
<div style="left:250px;top:338px;width:1px;height:21px;background:#000"></div>
<div style="left:251px;top:352px;width:1px;height:7px;background:#000"></div>
<div style="left:263px;top:338px;width:1px;height:21px;background:#000"></div>
<div style="left:264px;top:338px;width:1px;height:21px;background:#000"></div>
<div style="left:265px;top:338px;width:1px;height:21px;background:#000"></div>
<div style="left:266px;top:352px;width:1px;height:7px;background:#000"></div>
<div style="left:288px;top:352px;width:1px;height:7px;background:#000"></div>
<div style="left:289px;top:330px;width:1px;height:29px;background:#000"></div>
<div style="left:290px;top:345px;width:1px;height:14px;background:#000"></div>
<div style="left:291px;top:338px;width:1px;height:21px;background:#000"></div>
<div style="left:569px;top:352px;width:1px;height:7px;background:#000"></div>
<div style="left:570px;top:345px;width:1px;height:14px;background:#000"></div>
<div style="left:574px;top:352px;width:1px;height:7px;background:#000"></div>
<div style="left:577px;top:352px;width:1px;height:7px;background:#000"></div>
<div style="left:579px;top:352px;width:1px;height:7px;background:#000"></div>
<div style="left:581px;top:352px;width:1px;height:7px;background:#000"></div>
<div style="left:585px;top:352px;width:1px;height:7px;background:#000"></div>
<div style="left:586px;top:352px;width:1px;height:7px;background:#000"></div>
<div style="left:593px;top:352px;width:1px;height:7px;background:#000"></div>
<div style="left:594px;top:352px;width:1px;height:7px;background:#000"></div>
<div style="left:595px;top:345px;width:1px;height:14px;background:#000"></div>
<div style="left:602px;top:352px;width:1px;height:7px;background:#000"></div>
<div style="left:604px;top:352px;width:1px;height:7px;background:#000"></div>
<div style="left:607px;top:345px;width:1px;height:14px;background:#000"></div>
<div style="left:615px;top:352px;width:1px;height:7px;background:#000"></div>
<div style="left:618px;top:352px;width:1px;height:7px;background:#000"></div>
<div style="left:621px;top:352px;width:1px;height:7px;background:#000"></div>
<div style="left:623px;top:352px;width:1px;height:7px;background:#000"></div>
<div style="left:12px;top:398px;width:640px;height:1px;background:#bababa"></div>
<div style="left:12px;top:399px;width:640px;height:1px;background:#ffffff"></div>
<div class="b" style="left:34px;top:414px;width:86px;height:32px;border-style:solid;border-width:2px;border-color:#ffffff #bababa #bababa #ffffff;"></div>
<div class="t" style="left:39px;top:423px;color:#000">Single Step</div>
<div class="b" style="left:34px;top:460px;width:86px;height:32px;border-style:solid;border-width:2px;border-color:#bababa #ffffff #ffffff #bababa;background:#000;"></div>
<div class="t tr" style="left:39px;top:469px;color:#fff">RUN / PAUSE</div>
<svg style="position:absolute;left:14px;top:466px" width="20" height="20">
<circle cx="10.5" cy="11.8" r="5.6" fill="#b00000"/>
<circle cx="12.5" cy="14.5" r="3.5" fill="#a00000"/>
<circle cx="9.2" cy="10.3" r="5.2" fill="#f00000"/>
<circle cx="7" cy="8.2" r="1.3" fill="#fff"/>
<path d="M9.3 13 L11.8 10.4" stroke="#ffc8c0" stroke-width="1.1"/>
</svg>
<div class="t" style="left:134px;top:404px;color:#000">VM Operations per interval</div>
<div style="left:143px;top:423px;width:50px;height:63px;background:#bababa"></div>
<div style="left:144px;top:424px;width:49px;height:62px;background:#ffffff"></div>
<div style="left:145px;top:425px;width:47px;height:60px;background:#bababa"></div>
<div style="left:145px;top:425px;width:46px;height:59px;background:#e0e0e0"></div>
<svg style="position:absolute;left:0;top:0" width="664" height="528">
<path d="M147.5 433.5 L154.5 426.5 L161.5 433.5" fill="none" stroke="#ffffff" stroke-width="1.6"/>
<path d="M147.5 433.5 L154.5 440.5 L161.5 433.5" fill="none" stroke="#bababa" stroke-width="1.6"/>
<path d="M148.9 433.5 L154.5 427.9 L160.1 433.5 L154.5 439.1Z" fill="#e0e0e0"/>
</svg>
<svg style="position:absolute;left:0;top:0" width="664" height="528">
<path d="M147.5 454.5 L154.5 447.5 L161.5 454.5" fill="none" stroke="#ffffff" stroke-width="1.6"/>
<path d="M147.5 454.5 L154.5 461.5 L161.5 454.5" fill="none" stroke="#bababa" stroke-width="1.6"/>
<path d="M148.9 454.5 L154.5 448.9 L160.1 454.5 L154.5 460.1Z" fill="#e0e0e0"/>
</svg>
<svg style="position:absolute;left:0;top:0" width="664" height="528">
<path d="M147.5 475.5 L154.5 468.5 L161.5 475.5" fill="none" stroke="#bababa" stroke-width="1.6"/>
<path d="M147.5 475.5 L154.5 482.5 L161.5 475.5" fill="none" stroke="#ffffff" stroke-width="1.6"/>
<path d="M148.9 475.5 L154.5 469.9 L160.1 475.5 L154.5 481.1Z" fill="#000"/>
</svg>
<div class="t" style="left:165px;top:427px;color:#000">1</div>
<div class="t" style="left:165px;top:448px;color:#000">10</div>
<div class="t" style="left:165px;top:469px;color:#000">100</div>
<div class="b" style="left:526px;top:460px;width:86px;height:32px;border-style:solid;border-width:2px;border-color:#ffffff #bababa #bababa #ffffff;"></div>
<div class="t" style="left:555px;top:469px;color:#000">QUIT</div>
<div style="left:12px;top:502px;width:240px;height:1px;background:#bababa"></div>
<div style="left:12px;top:503px;width:240px;height:1px;background:#ffffff"></div>
<div style="left:402px;top:502px;width:250px;height:1px;background:#bababa"></div>
<div style="left:402px;top:503px;width:250px;height:1px;background:#ffffff"></div>
<div style="left:254px;top:494px;width:148px;height:17px;background:#bababa"></div>
<div style="left:255px;top:495px;width:147px;height:16px;background:#ffffff"></div>
<div style="left:256px;top:496px;width:145px;height:14px;background:#bababa"></div>
<div style="left:256px;top:496px;width:144px;height:13px;background:#e0e0e0"></div>
<div class="t" style="left:274px;top:496px;color:#000">ICON Front Panel</div>
</body></html>
